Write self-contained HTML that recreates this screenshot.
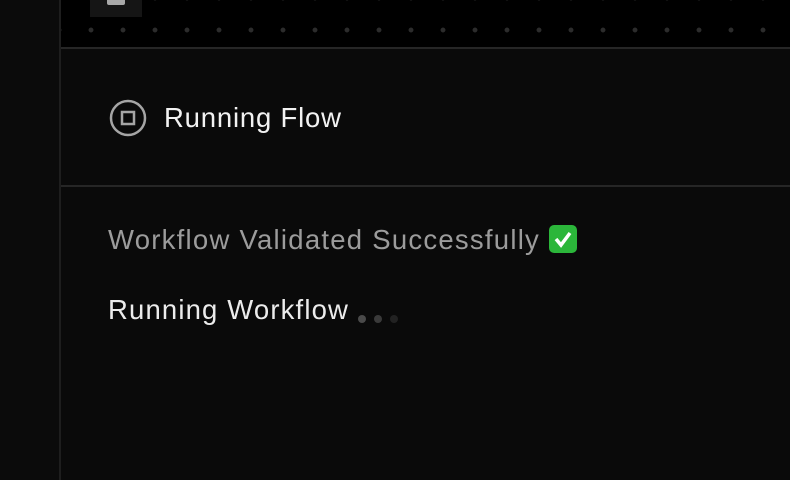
<!DOCTYPE html><html><head><style>
body{margin:0;width:790px;height:480px;background:#0a0a0a;position:relative;overflow:hidden;font-family:"Liberation Sans",sans-serif}
.side{position:absolute;left:0;top:0;width:59px;height:480px;background:#0b0b0b;border-right:2px solid #1e1e1e}
.top{position:absolute;left:61px;top:0;width:729px;height:47px;background:#000 radial-gradient(circle,#2c2c2c 2.2px,transparent 2.6px);background-size:32px 32px;background-position:14px 14px;border-bottom:2px solid #262626}
.btn{position:absolute;left:90px;top:0;width:52px;height:17px;background:#151515}
.btn i{position:absolute;left:17px;top:0;width:18px;height:5px;background:#a8a8a8;border-radius:0 0 2px 2px}
.hdr{position:absolute;left:61px;top:185px;width:729px;height:2px;background:#262626}
.t{position:absolute;font-size:27.5px;white-space:nowrap}
.chk{display:inline-block;width:28px;height:28px;background:#2bb63a;border-radius:5px;vertical-align:-4px;position:relative;margin-left:9px}
.d{position:absolute;top:315px;width:8px;height:8px;border-radius:50%}
</style></head><body>
<div class="side"></div>
<div class="top"></div>
<div class="btn"><i></i></div>
<div class="hdr"></div>
<svg style="position:absolute;left:108px;top:98px" width="40" height="40"><circle cx="20" cy="20" r="17" fill="none" stroke="#a5a5a5" stroke-width="2.5"/><rect x="14" y="14" width="12" height="12" fill="none" stroke="#a5a5a5" stroke-width="2.5"/></svg>
<div class="t" style="left:164px;top:102px;color:#f2f2f2;letter-spacing:0.8px">Running Flow</div>
<div class="t" style="left:108px;top:224px;color:#9c9c9c;letter-spacing:1.25px">Workflow Validated Successfully<span class="chk" style="letter-spacing:0"><svg width="28" height="28" style="position:absolute;left:0;top:0"><path d="M7 14 L12 20 L21 8" stroke="#fff" stroke-width="3.5" fill="none"/></svg></span></div>
<div class="t" style="left:108px;top:294px;color:#ececec;letter-spacing:1.15px">Running Workflow</div>
<div class="d" style="left:358px;background:#4a4a4a"></div>
<div class="d" style="left:374px;background:#3a3a3a"></div>
<div class="d" style="left:390px;background:#222"></div>
</body></html>
